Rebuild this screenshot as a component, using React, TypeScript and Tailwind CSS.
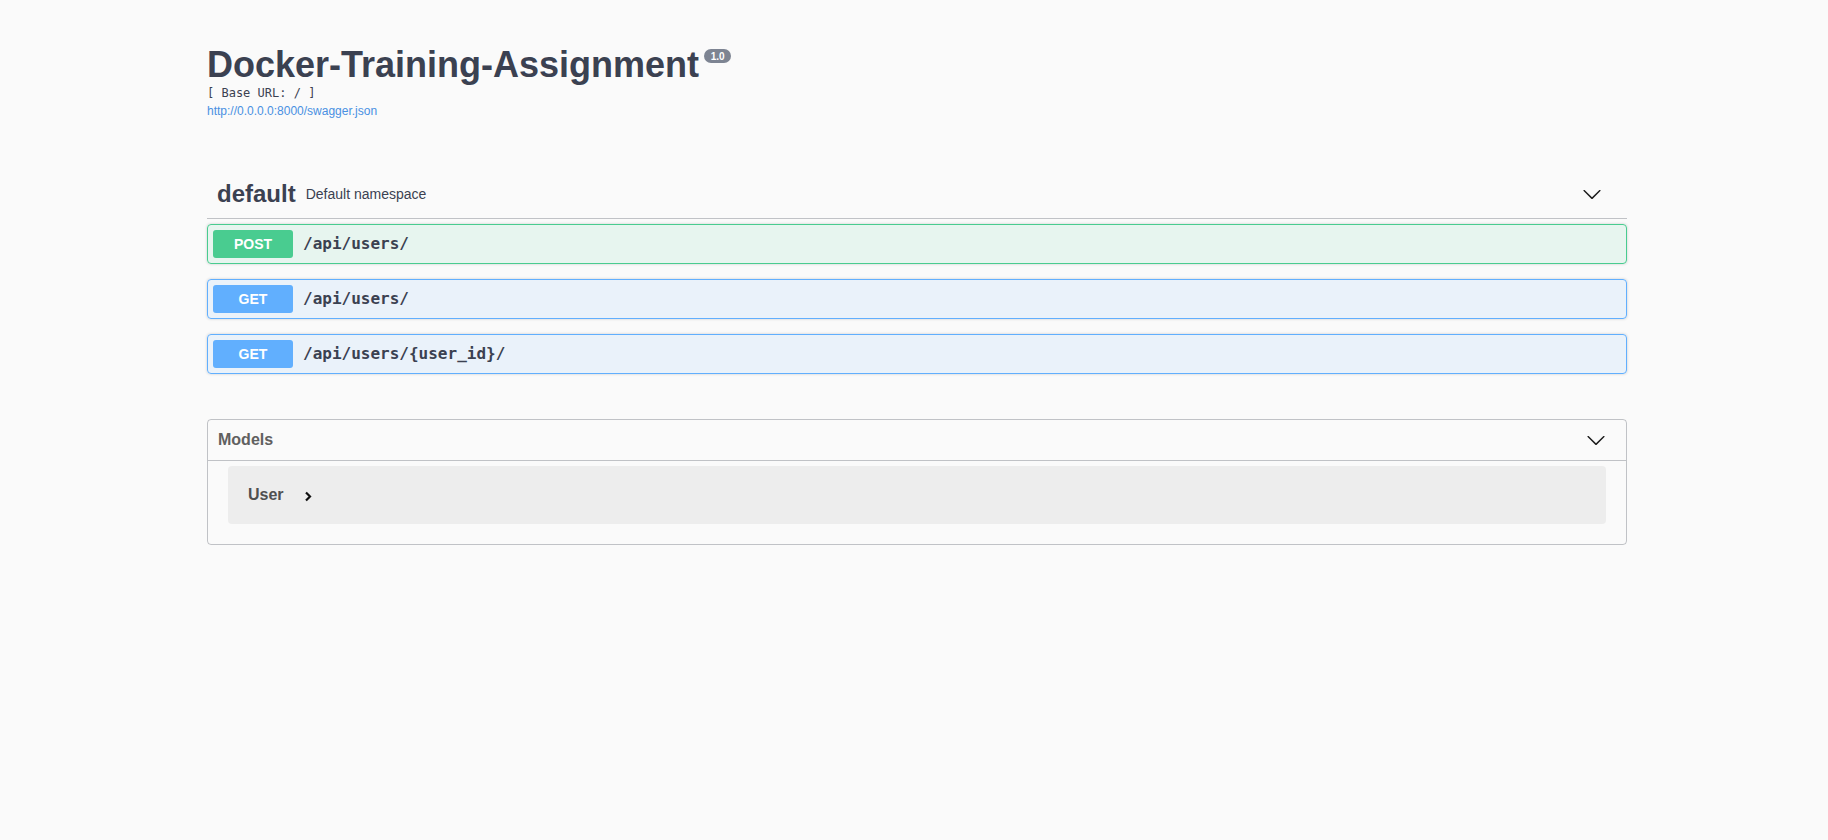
import React from 'react';

const OPS = [
  { method: 'POST', path: '/api/users/', color: 'post' },
  { method: 'GET', path: '/api/users/', color: 'get' },
  { method: 'GET', path: '/api/users/{user_id}/', color: 'get' },
];

function Arrow() {
  return (
    <svg width="20" height="20" viewBox="0 0 20 20" className="shrink-0 fill-[#1b1b1b]">
      <path d="M17.418 6.109c.272-.268.709-.268.979 0s.271.701 0 .969l-7.908 7.83c-.27.268-.707.268-.979 0l-7.908-7.83c-.27-.268-.27-.701 0-.969.271-.268.709-.268.979 0L10 13.25l7.418-7.141z" />
    </svg>
  );
}

export default function App() {
  return (
    <div className="min-h-screen bg-[#fafafa] font-['Liberation_Sans',Arial,sans-serif] text-[#3b4151]">
      <div className="ml-[207px] w-[1420px]">
        {/* info */}
        <div className="pt-[44px]">
          <div className="flex items-start">
            <h2 className="text-[36px] font-bold leading-[41px]">Docker-Training-Assignment</h2>
            <span className="ml-[5px] mt-[5px] flex h-[14px] w-[27px] items-center justify-center rounded-full bg-[#7d8492] text-[10px] font-bold text-white">
              1.0
            </span>
          </div>
          <div className="font-['DejaVu_Sans_Mono',monospace] text-[12px] leading-[17px] whitespace-pre">[ Base URL: / ]</div>
          <a className="block text-[12px] leading-[18px] text-[#4990e2]" href="#">
            http://0.0.0.0:8000/swagger.json
          </a>
        </div>

        {/* default tag */}
        <div className="mt-[50px] mb-[5px] flex h-[49px] items-center border-b border-[rgba(59,65,81,0.3)] pl-[10px] pr-[25px]">
          <span className="text-[24px] font-bold">default</span>
          <span className="px-[10px] text-[14px]">Default namespace</span>
          <div className="flex-1" />
          <Arrow />
        </div>

        <div className="flex flex-col gap-[15px]">
          {OPS.map((op, i) => (
            <div
              key={i}
              className={
                op.color === 'post'
                  ? 'flex h-[40px] items-center rounded-[4px] border border-[#49cc90] bg-[rgba(73,204,144,0.1)] px-[5px] shadow-[0_0_3px_rgba(0,0,0,0.19)]'
                  : 'flex h-[40px] items-center rounded-[4px] border border-[#61affe] bg-[rgba(97,175,254,0.1)] px-[5px] shadow-[0_0_3px_rgba(0,0,0,0.19)]'
              }
            >
              <span
                className={
                  op.color === 'post'
                    ? 'flex h-[28px] w-[80px] items-center justify-center rounded-[3px] bg-[#49cc90] text-[14px] font-bold text-white'
                    : 'flex h-[28px] w-[80px] items-center justify-center rounded-[3px] bg-[#61affe] text-[14px] font-bold text-white'
                }
              >
                {op.method}
              </span>
              <span className="px-[10px] font-['DejaVu_Sans_Mono',monospace] text-[16px] font-bold">{op.path}</span>
            </div>
          ))}
        </div>

        {/* models */}
        <div className="mt-[45px] rounded-[4px] border border-[rgba(59,65,81,0.3)]">
          <div className="flex h-[41px] items-center justify-between border-b border-[rgba(59,65,81,0.3)] pl-[10px] pr-[20px]">
            <span className="text-[16px] font-bold text-[#606060]">Models</span>
            <Arrow />
          </div>
          <div className="mx-[20px] mt-[5px] mb-[20px] flex h-[58px] items-center rounded-[4px] bg-[#ededed] px-[20px]">
            <span className="text-[16px] font-bold text-[#505050]">User</span>
            <svg width="8" height="11" viewBox="0 0 8 11" className="ml-[20px] mt-[2px]">
              <path d="M2 1.5l4 4-4 4" fill="none" stroke="#111" strokeWidth="2.2" />
            </svg>
          </div>
        </div>
      </div>
    </div>
  );
}
